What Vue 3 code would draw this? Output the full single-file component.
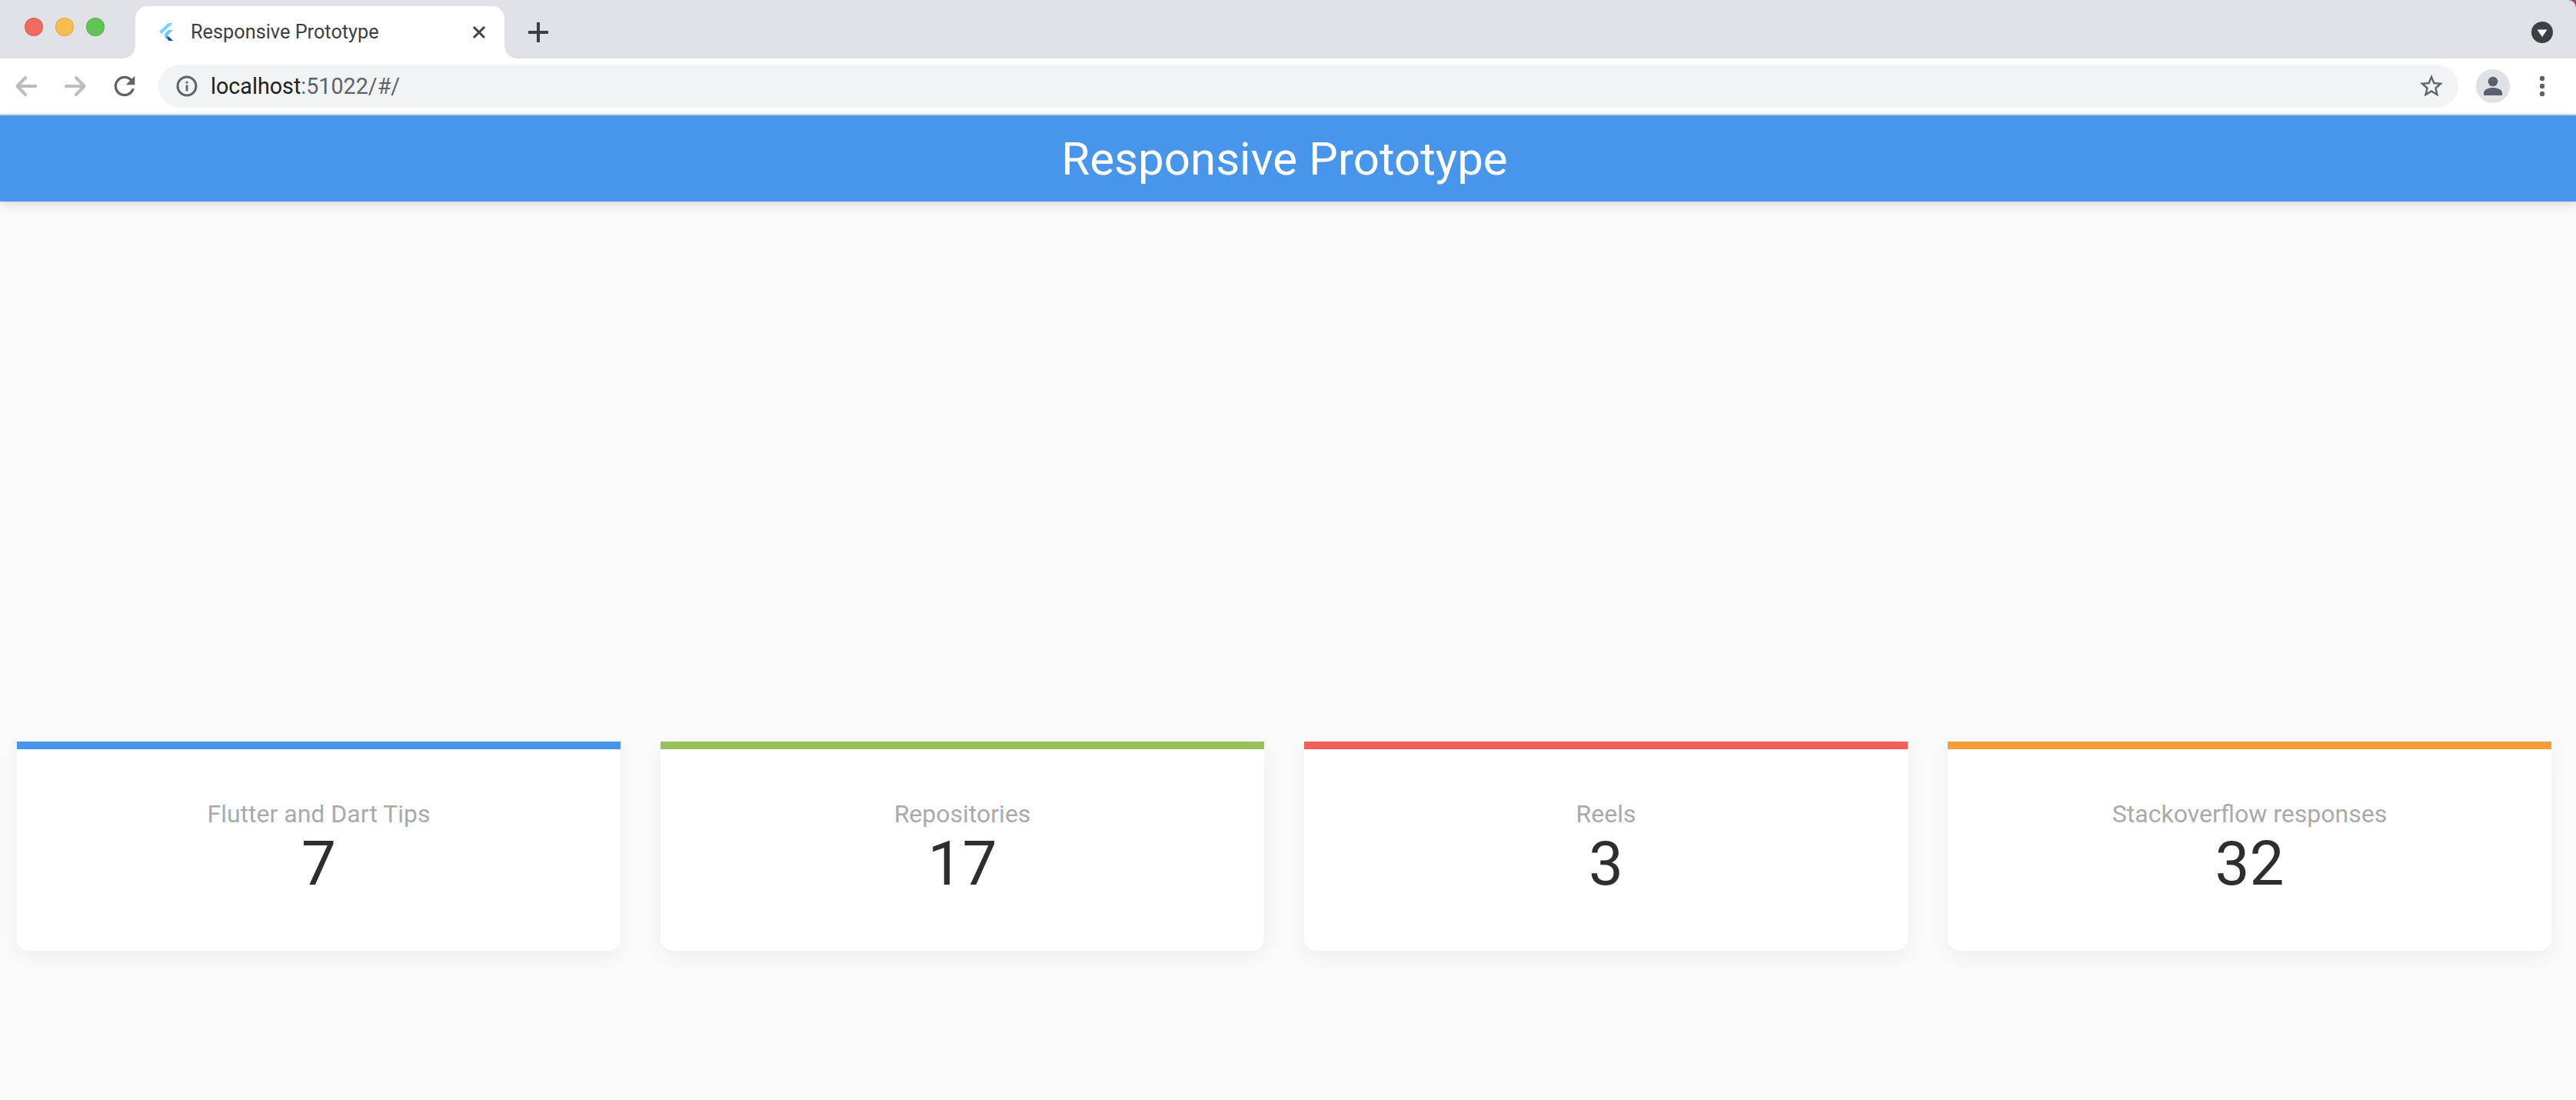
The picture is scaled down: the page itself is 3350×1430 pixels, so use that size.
<script setup>
const cards = [
  { label: 'Flutter and Dart Tips', value: 7, color: '#4796ec' },
  { label: 'Repositories', value: 17, color: '#9bc15f' },
  { label: 'Reels', value: 3, color: '#ef5f5b' },
  { label: 'Stackoverflow responses', value: 32, color: '#f39c38' },
]
</script>

<template>
  <div class="page">
    <div class="window-top">
      <div class="strip">
        <div class="lights">
          <span class="light red"></span>
          <span class="light yellow"></span>
          <span class="light green"></span>
        </div>
        <div class="tab">
          <svg class="favicon" width="18" height="24" viewBox="0 0 18 24">
            <polygon points="0,11 12,0 18,0 3,14" fill="#7fd0fb" />
            <polygon points="6,15 12,9 18,9 10,17" fill="#6fcbf9" />
            <polygon points="7,18 10,15 13,18 10,21" fill="#4fbdf5" />
            <polygon points="10,18 13,18 18,23 12,23" fill="#1c4f9c" />
          </svg>
          <span class="tab-title">Responsive Prototype</span>
          <svg class="tab-close" width="18" height="18" viewBox="0 0 18 18">
            <path d="M2 2L16 16M16 2L2 16" stroke="#444" stroke-width="3" fill="none" />
          </svg>
        </div>
        <svg class="new-tab" width="26" height="26" viewBox="0 0 26 26">
          <path d="M13 1V25M1 13H25" stroke="#3c4043" stroke-width="4" stroke-linecap="round" fill="none" />
        </svg>
        <svg class="tab-search" width="28" height="28" viewBox="0 0 28 28">
          <circle cx="14" cy="14" r="14" fill="#3c4043" />
          <polygon points="7.5,10.5 20.5,10.5 14,20" fill="#fff" />
        </svg>
      </div>
    </div>

    <div class="toolbar">
      <svg class="nav-icon" width="28" height="28" viewBox="0 0 28 28">
        <path d="M26 14H3M13 3L2.5 14L13 25" stroke="#bdbdbd" stroke-width="4" stroke-linecap="round" stroke-linejoin="round" fill="none" />
      </svg>
      <svg class="nav-icon fwd" width="28" height="28" viewBox="0 0 28 28">
        <path d="M2 14H25M15 3L25.5 14L15 25" stroke="#bdbdbd" stroke-width="4" stroke-linecap="round" stroke-linejoin="round" fill="none" />
      </svg>
      <svg class="reload" width="40" height="40" viewBox="0 0 24 24">
        <path fill="#5f6368" d="M17.65 6.35C16.2 4.9 14.21 4 12 4c-4.42 0-7.99 3.58-7.99 8s3.57 8 7.99 8c3.73 0 6.84-2.55 7.73-6h-2.08c-.82 2.33-3.04 4-5.65 4-3.31 0-6-2.69-6-6s2.69-6 6-6c1.66 0 3.14.69 4.22 1.78L13 11h7V4l-2.35 2.35z" />
      </svg>
      <div class="omnibox">
        <svg class="info" width="28" height="28" viewBox="0 0 28 28">
          <circle cx="14" cy="14" r="12" stroke="#5f6368" stroke-width="3" fill="none" />
          <rect x="12.6" y="12.5" width="2.8" height="8" fill="#5f6368" />
          <rect x="12.6" y="7.8" width="2.8" height="2.8" fill="#5f6368" />
        </svg>
        <span class="url"><span class="host">localhost</span>:51022/#/</span>
        <svg class="star" width="36" height="36" viewBox="0 0 24 24">
          <path fill="#5f6368" d="M22 9.24l-7.19-.62L12 2 9.19 8.63 2 9.24l5.46 4.73L5.82 21 12 17.27 18.18 21l-1.63-7.03L22 9.24zM12 15.4l-3.76 2.27 1-4.28-3.32-2.88 4.38-.38L12 6.1l1.71 4.04 4.38.38-3.32 2.88 1 4.28L12 15.4z" />
        </svg>
      </div>
      <svg class="avatar" width="44" height="44" viewBox="0 0 44 44">
        <circle cx="22" cy="22" r="22" fill="#dfe1e5" />
        <circle cx="22" cy="16" r="6.3" fill="#5a6072" />
        <path d="M10 34V31C10 26 17 24 22 24S34 26 34 31V34Z" fill="#5a6072" />
      </svg>
      <svg class="menu" width="8" height="28" viewBox="0 0 8 28">
        <circle cx="4" cy="4" r="3.2" fill="#5f6368" />
        <circle cx="4" cy="14" r="3.2" fill="#5f6368" />
        <circle cx="4" cy="24" r="3.2" fill="#5f6368" />
      </svg>
    </div>

    <header class="appbar">Responsive Prototype</header>

    <main class="content">
      <section class="cards">
        <article v-for="card in cards" :key="card.label" class="card">
          <div class="bar" :style="{ background: card.color }"></div>
          <div class="card-body">
            <div class="label">{{ card.label }}</div>
            <div class="value">{{ card.value }}</div>
          </div>
        </article>
      </section>
    </main>
  </div>
</template>

<style>
html, body { margin: 0; background: #fafafa; }
</style>

<style scoped>
.page {
  width: 3350px;
  height: 1430px;
  overflow: hidden;
  display: flex;
  flex-direction: column;
  background: #fafafa;
  font-family: Roboto, "Liberation Sans", sans-serif;
}
.window-top {
  flex: none;
  background: #9c4a78;
}
.strip {
  height: 76px;
  box-sizing: border-box;
  padding-top: 8px;
  display: flex;
  background: #dfe1e5;
  border-top-right-radius: 10px;
}
.lights {
  width: 176px;
  box-sizing: border-box;
  padding: 15px 0 0 32px;
  display: flex;
  gap: 16px;
  flex: none;
}
.light {
  width: 24px;
  height: 24px;
  box-sizing: border-box;
  border-radius: 50%;
  border: 1px solid rgba(0, 0, 0, 0.12);
}
.red { background: #f1695f; }
.yellow { background: #f7bd4f; }
.green { background: #60c554; }
.tab {
  width: 480px;
  height: 68px;
  flex: none;
  position: relative;
  display: flex;
  align-items: center;
  box-sizing: border-box;
  padding: 0 24px 0 31px;
  background: #fff;
  border-radius: 16px 16px 0 0;
}
.tab::before, .tab::after {
  content: "";
  position: absolute;
  bottom: 0;
  width: 16px;
  height: 16px;
}
.tab::before {
  left: -16px;
  background: radial-gradient(circle at 0 0, transparent 15.5px, #fff 16px);
}
.tab::after {
  right: -16px;
  background: radial-gradient(circle at 100% 0, transparent 15.5px, #fff 16px);
}
.favicon { flex: none; }
.tab-title {
  margin-left: 23px;
  flex: 1;
  font-size: 25.3px;
  line-height: 30px;
  color: #3c4043;
  white-space: nowrap;
}
.tab-close { flex: none; }
.new-tab { flex: none; margin: 21px 0 0 31px; }
.tab-search { flex: none; margin: 20px 30px 0 auto; }
.toolbar {
  height: 74px;
  flex: none;
  box-sizing: border-box;
  display: flex;
  align-items: center;
  background: #fff;
  border-bottom: 2px solid #dadada;
  padding: 0 40px 0 20px;
}
.nav-icon { flex: none; }
.fwd { margin-left: 36px; }
.reload { flex: none; margin-left: 30px; }
.omnibox {
  flex: none;
  width: 2991px;
  height: 56px;
  margin-left: 24px;
  box-sizing: border-box;
  display: flex;
  align-items: center;
  padding: 0 17px 0 22px;
  background: #f1f3f4;
  border-radius: 28px;
}
.info { flex: none; margin-left: 1px; }
.url {
  margin-left: 17px;
  flex: 1;
  font-size: 28.7px;
  color: #5f6368;
  white-space: nowrap;
}
.host { color: #202124; }
.star { flex: none; }
.avatar { flex: none; margin-left: 23px; }
.menu { flex: none; margin-left: 38px; }
.appbar {
  height: 112px;
  flex: none;
  display: flex;
  align-items: center;
  justify-content: center;
  position: relative;
  box-sizing: border-box;
  padding-right: 9px;
  background: #4796ec;
  color: #fff;
  font-size: 60px;
  box-shadow: 0 4px 12px rgba(0, 0, 0, 0.14);
}
.content {
  flex: 1;
  padding-top: 702px;
  box-sizing: border-box;
}
.cards {
  display: grid;
  grid-template-columns: repeat(4, 785px);
  column-gap: 52px;
  padding-left: 22px;
}
.card {
  height: 272px;
  background: #fff;
  border-radius: 0 0 16px 16px;
  display: flex;
  flex-direction: column;
  box-shadow: 0 8px 24px rgba(0, 0, 0, 0.05);
}
.bar { height: 10px; flex: none; }
.card-body {
  flex: 1;
  display: flex;
  flex-direction: column;
  align-items: center;
  padding-top: 66px;
}
.label {
  font-size: 32px;
  line-height: 36px;
  color: #aaaaaa;
}
.value {
  font-size: 80px;
  line-height: 94px;
  color: #2e2e2e;
  font-weight: 400;
}
</style>
